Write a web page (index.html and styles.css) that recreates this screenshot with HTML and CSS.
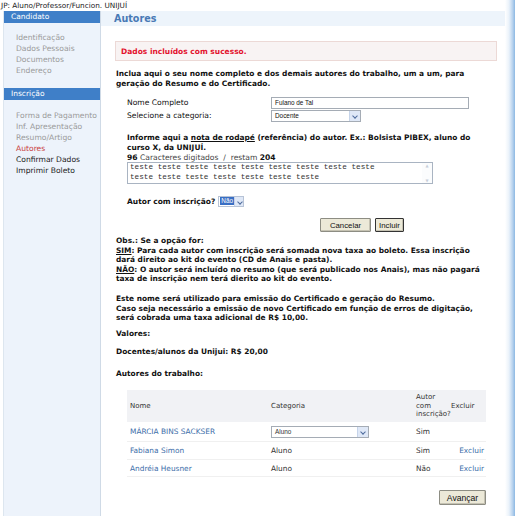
FILE: index.html
```html
<!DOCTYPE html>
<html lang="pt">
<head>
    <meta charset="UTF-8">
    <title>Autores</title>
    <link rel="stylesheet" href="styles.css">
</head>
<body>

<div class="topline">JP: Aluno/Professor/Funcion. UNIJUÍ</div>

<div class="page">
    <div class="sidebar">
        <div class="menu-title">Candidato</div>
        <ul class="menu">
            <li class="off">Identificação</li>
            <li class="off">Dados Pessoais</li>
            <li class="off">Documentos</li>
            <li class="off">Endereço</li>
        </ul>
        <div class="menu-title">Inscrição</div>
        <ul class="menu menu-2">
            <li class="off">Forma de Pagamento</li>
            <li class="off">Inf. Apresentação</li>
            <li class="off">Resumo/Artigo</li>
            <li class="current">Autores</li>
            <li>Confirmar Dados</li>
            <li>Imprimir Boleto</li>
        </ul>
    </div>

    <div class="main">
        <h1>Autores</h1>
        <div class="content">
            <div class="success">Dados incluídos com sucesso.</div>

            <p class="bold intro">Inclua aqui o seu nome completo e dos demais autores do trabalho, um a um, para<br>geração do Resumo e do Certificado.</p>

            <div class="form">
                <div class="row first">
                    <label>Nome Completo</label>
                    <div class="input">Fulano de Tal</div>
                </div>
                <div class="row">
                    <label>Selecione a categoria:</label>
                    <div class="select sel-cat"><span>Docente</span><i class="arrow"></i></div>
                </div>

                <p class="bold note">Informe aqui a <u>nota de rodapé</u> (referência) do autor. Ex.: Bolsista PIBEX, aluno do<br>curso X, da UNIJUÍ.</p>
                <div class="count"><b>96</b> Caracteres digitados &nbsp;/&nbsp; restam <b>204</b></div>
                <div class="textarea">
                    <div class="ta-text">teste teste teste teste teste teste teste teste teste<br>teste teste teste teste teste teste teste</div>
                    <div class="ta-scroll"><span>&#9650;</span><span>&#9660;</span></div>
                </div>

                <div class="inscr">
                    <b>Autor com inscrição?</b>
                    <div class="select sel-nao"><span class="hl">Não</span><i class="arrow"></i></div>
                </div>

                <div class="buttons">
                    <button class="btn btn-cancel">Cancelar</button>
                    <button class="btn btn-focus">Incluir</button>
                </div>
            </div>

            <div class="bold obs">
                Obs.: Se a opção for:<br>
                <u>SIM</u>: Para cada autor com inscrição será somada nova taxa ao boleto. Essa inscrição<br>
                dará direito ao kit do evento (CD de Anais e pasta).<br>
                <u>NÃO</u>: O autor será incluído no resumo (que será publicado nos Anais), mas não pagará<br>
                taxa de inscrição nem terá dierito ao kit do evento.
            </div>

            <div class="bold obs obs-2">
                Este nome será utilizado para emissão do Certificado e geração do Resumo.<br>
                Caso seja necessário a emissão de novo Certificado em função de erros de digitação,<br>
                será cobrada uma taxa adicional de R$ 10,00.
            </div>

            <div class="bold valores">Valores:</div>
            <div class="bold valores2">Docentes/alunos da Unijui: R$ 20,00</div>

            <div class="bold autores-title">Autores do trabalho:</div>

            <table class="authors">
                <thead>
                    <tr>
                        <th class="c-nome">Nome</th>
                        <th class="c-cat">Categoria</th>
                        <th class="c-insc">Autor<br>com<br>inscrição?</th>
                        <th class="c-exc">Excluir</th>
                    </tr>
                </thead>
                <tbody>
                    <tr class="edit">
                        <td><a>MÁRCIA BINS SACKSER</a></td>
                        <td><div class="select sel-row"><span>Aluno</span><i class="arrow"></i></div></td>
                        <td>Sim</td>
                        <td></td>
                    </tr>
                    <tr>
                        <td><a>Fabiana Simon</a></td>
                        <td>Aluno</td>
                        <td>Sim</td>
                        <td class="exc"><a>Excluir</a></td>
                    </tr>
                    <tr>
                        <td><a>Andréia Heusner</a></td>
                        <td>Aluno</td>
                        <td>Não</td>
                        <td class="exc"><a>Excluir</a></td>
                    </tr>
                </tbody>
            </table>

            <div class="next">
                <button class="btn btn-next">Avançar</button>
            </div>
        </div>
    </div>
    <div class="edge"></div>
</div>

</body>
</html>
```

FILE: styles.css
```css
* {
    box-sizing: border-box;
    margin: 0;
    padding: 0;
}

body {
    font-family: 'DejaVu Sans', Verdana, sans-serif;
    font-size: 7.5px;
    color: #111;
    background: #fff;
    width: 515px;
    height: 518px;
    overflow: hidden;
}

.topline {
    height: 11px;
    font-size: 7.3px;
    line-height: 11px;
    color: #222;
    padding-left: 1px;
}

.page {
    display: flex;
    height: 505px;
}

/* left menu */
.sidebar {
    width: 98px;
    margin-left: 3px;
    background: #edf3fb;
    border-left: 1px solid #dde6ef;
    border-right: 1px solid #cfdae6;
    flex-shrink: 0;
}

.menu-title {
    background: #3f7fc8;
    color: #fff;
    height: 12px;
    line-height: 12px;
    padding-left: 7px;
    font-size: 7.5px;
}

.menu {
    list-style: none;
    padding: 8.5px 0 12.5px 12px;
}

.menu-2 {
    padding-top: 10px;
}

.menu li {
    height: 11px;
    line-height: 11px;
    font-size: 7.6px;
    color: #222;
    white-space: nowrap;
}

.menu li.off {
    color: #9a9a9a;
}

.menu li.current {
    color: #c94040;
}

/* main area */
.main {
    flex: 1;
}

h1 {
    background: #edf4fb;
    color: #4879b5;
    font-size: 9.6px;
    font-weight: bold;
    height: 15px;
    line-height: 15px;
    padding-left: 13px;
}

.content {
    padding: 14px 8px 0 15px;
}

.success {
    background: #f8f3f3;
    border: 1px solid #ecd9d6;
    color: #e3112d;
    font-weight: bold;
    height: 20px;
    line-height: 19px;
    padding-left: 5px;
    width: 382px;
    margin-left: -1px;
    margin-top: 1px;
}

.bold {
    font-weight: bold;
    font-size: 7.45px;
    white-space: nowrap;
}

.intro {
    line-height: 10px;
    margin-top: 8px;
}

.form {
    padding-left: 11px;
}

.row {
    display: flex;
    align-items: center;
    height: 13px;
}

.row.first {
    margin-top: 7px;
}

.row label {
    width: 144px;
    font-size: 7.6px;
}

.input {
    width: 198px;
    height: 12px;
    border: 1px solid #a5acb5;
    font-family: 'Liberation Sans', Arial, sans-serif;
    font-size: 6.4px;
    line-height: 10px;
    padding-left: 3px;
    background: #fff;
}

.select {
    display: flex;
    align-items: center;
    border: 1px solid #a5acb5;
    background: #fff;
    font-family: 'Liberation Sans', Arial, sans-serif;
    font-size: 6.4px;
    height: 12px;
}

.select span {
    flex: 1;
    padding-left: 3px;
}

.arrow {
    width: 11px;
    height: 10px;
    background: #dfe8f7;
    border-left: 1px solid #c6d4ea;
    position: relative;
}

.arrow::after {
    content: "";
    position: absolute;
    left: 3px;
    top: 3px;
    width: 3px;
    height: 3px;
    border-right: 1.3px solid #4d6a9c;
    border-bottom: 1.3px solid #4d6a9c;
    transform: rotate(45deg);
}

.sel-cat {
    width: 90px;
}

.note {
    line-height: 10px;
    margin-top: 11px;
}

.count {
    line-height: 9px;
    color: #444;
    font-size: 7.6px;
}

.count b {
    color: #111;
}

.textarea {
    display: flex;
    width: 306px;
    height: 22px;
    border: 1px solid #a9b4c2;
    background: #fff;
}

.ta-text {
    flex: 1;
    font-family: 'Liberation Mono', 'Courier New', monospace;
    font-size: 7.7px;
    line-height: 9.5px;
    color: #333;
    padding: 0 0 0 2px;
}

.ta-scroll {
    width: 10px;
    display: flex;
    flex-direction: column;
    justify-content: space-between;
    align-items: center;
    font-size: 4px;
    color: #c7cfda;
    background: #fbfcfd;
}

.inscr {
    display: flex;
    align-items: center;
    gap: 3px;
    margin-top: 11px;
    height: 12px;
}

.sel-nao {
    width: 26px;
    height: 11px;
    border-color: #b7c3d6;
}

.sel-nao span {
    padding-left: 1px;
}

.hl {
    background: #3a6fc4;
    color: #fff;
    flex: 0 0 auto !important;
    padding: 0 1px !important;
    line-height: 8px;
    margin-left: 1px;
}

.sel-nao .arrow {
    width: 10px;
    height: 9px;
}

.buttons {
    display: flex;
    gap: 4px;
    margin: 11px 0 0 193px;
}

.btn {
    font-family: 'Liberation Sans', Arial, sans-serif;
    font-size: 7.8px;
    background: #ece9d8;
    border: 1px solid #8d8d83;
    border-radius: 1px;
    height: 14px;
    color: #111;
    box-shadow: inset -1px -1px 0 #c5c2b2;
}

.btn-cancel {
    width: 51px;
}

.btn-focus {
    border: 1px solid #333;
    width: 29px;
}

.obs {
    line-height: 9.6px;
    margin-top: 4px;
}

.obs-2 {
    margin-top: 10px;
}

.valores {
    margin-top: 6px;
}

.valores2 {
    margin-top: 9px;
}

.autores-title {
    margin-top: 13px;
}

.authors {
    border-collapse: collapse;
    margin: 12px 0 0 11px;
    width: 359px;
    font-size: 7.4px;
}

.authors th {
    background: #f1f2f5;
    font-weight: normal;
    color: #333;
    text-align: left;
    height: 32px;
    line-height: 8.5px;
    padding-left: 3px;
    vertical-align: middle;
    font-size: 7px;
}

.authors .c-nome { width: 141px; }
.authors .c-cat { width: 145px; }
.authors .c-insc { width: 38px; }
.authors th.c-exc { padding-left: 0; }

.authors td {
    height: 17.5px;
    padding-left: 3px;
    border-bottom: 1px solid #f0f0f0;
    color: #333;
}

.authors tr.edit td {
    height: 20px;
}

.authors a {
    color: #3d6ea9;
}

.authors td.exc {
    text-align: right;
    padding-right: 2px;
}

.sel-row {
    width: 98px;
}

.next {
    display: flex;
    justify-content: flex-end;
    width: 370px;
    margin-top: 13px;
}

.btn-next {
    font-size: 8.6px;
    height: 15px;
    width: 47px;
}

.edge {
    width: 10px;
    flex-shrink: 0;
    margin-top: -11px;
    background: linear-gradient(to right, #fff 0, #eaf2fa 40%, #b9d3ee 75%, #8cb8e3 100%);
}
```
